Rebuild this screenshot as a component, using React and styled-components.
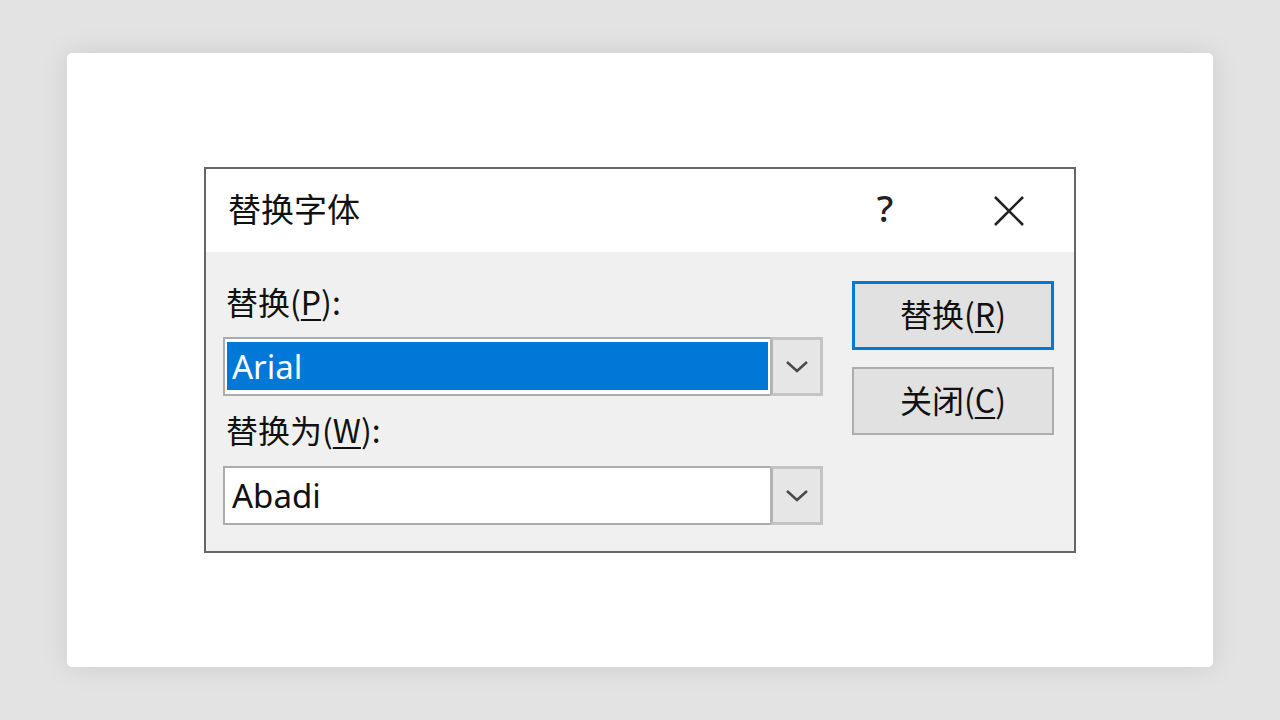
import React from "react";
import styled, { createGlobalStyle } from "styled-components";

const Global = createGlobalStyle`
  html, body { margin: 0; padding: 0; }
  body {
    background: #e3e3e3;
    font-family: "Noto Sans", "Noto Sans CJK SC", sans-serif;
  }
`;

const Page = styled.div`
  width: 1280px;
  height: 720px;
  padding: 53px 67px;
  box-sizing: border-box;
`;

const Card = styled.div`
  width: 100%;
  height: 100%;
  background: #ffffff;
  border-radius: 5px;
  box-shadow: 0 0 28px rgba(0, 0, 0, 0.1);
  display: flex;
  align-items: center;
  justify-content: center;
`;

const Dialog = styled.div`
  width: 872px;
  height: 386px;
  box-sizing: border-box;
  border: 2px solid #666666;
  background: #f0f0f0;
  display: flex;
  flex-direction: column;
  color: #111;
`;

const TitleBar = styled.div`
  height: 83px;
  box-sizing: border-box;
  background: #ffffff;
  display: flex;
  align-items: center;
  padding: 0 35px 6px 22px;
`;

const Title = styled.div`
  font-family: "Noto Sans CJK SC", sans-serif;
  font-size: 33px;
  flex: 1;
  color: #111;
`;

const Help = styled.div`
  width: 50px;
  text-align: center;
  font-family: "Noto Sans", sans-serif;
  font-size: 37px;
  font-weight: 500;
  color: #222;
  margin-right: 69px;
  line-height: 1;
`;

const CloseX = styled.div`
  width: 60px;
  display: flex;
  justify-content: center;
  align-items: center;
  margin-top: 6px;
`;

const Body = styled.div`
  flex: 1;
  display: flex;
  align-items: flex-start;
  padding: 29px 20px 0 17px;
  gap: 29px;
`;

const LeftCol = styled.div`
  width: 600px;
  display: flex;
  flex-direction: column;
`;

const Label = styled.div`
  font-size: 32px;
  line-height: 40px;
  height: 40px;
  margin-bottom: ${(p) => p.$mb}px;
  margin-top: ${(p) => p.$mt || 0}px;
  padding-left: 3px;
  font-family: "Noto Sans CJK SC", sans-serif;
  color: #111;
  u { text-underline-offset: 4px; text-decoration-thickness: 2px; }
`;

const Combo = styled.div`
  height: 59px;
  box-sizing: border-box;
  border: 2px solid #acacac;
  background: #ffffff;
  display: flex;
`;

const Field = styled.div`
  flex: 1;
  padding: 3px 2px 4px 2px;
  display: flex;
`;

const Value = styled.div`
  flex: 1;
  display: flex;
  align-items: center;
  padding-left: 5px;
  font-family: "Noto Sans", sans-serif;
  font-size: 33px;
  background: ${(p) => (p.$selected ? "#0078d7" : "transparent")};
  color: ${(p) => (p.$selected ? "#ffffff" : "#111")};
`;

const DropBtn = styled.div`
  width: 53px;
  box-sizing: border-box;
  background: #e6e6e6;
  border: 3px solid #c4c4c4;
  border-left-color: #b4b4b4;
  margin: -2px -2px -2px 0;
  display: flex;
  align-items: center;
  justify-content: center;
`;

const RightCol = styled.div`
  width: 202px;
  display: flex;
  flex-direction: column;
  gap: 17px;
`;

const Button = styled.div`
  height: ${(p) => p.$h}px;
  box-sizing: border-box;
  background: #e1e1e1;
  border: ${(p) => (p.$default ? "3px solid #0078d7" : "2px solid #adadad")};
  display: flex;
  align-items: center;
  justify-content: center;
  padding-bottom: 5px;
  font-family: "Noto Sans CJK SC", sans-serif;
  font-size: 32px;
  color: #111;
  u { text-underline-offset: 4px; text-decoration-thickness: 2px; }
`;

const Chevron = () => (
  <svg width="24" height="14" viewBox="0 0 24 14">
    <path d="M2 2 L12 11 L22 2" fill="none" stroke="#4a4a4a" strokeWidth="2.5" />
  </svg>
);

const XIcon = () => (
  <svg width="32" height="32" viewBox="0 0 32 32">
    <path d="M2 2 L30 30 M30 2 L2 30" stroke="#222" strokeWidth="2.6" fill="none" />
  </svg>
);

export default function App() {
  return (
    <>
      <Global />
      <Page>
        <Card>
          <Dialog>
            <TitleBar>
              <Title>替换字体</Title>
              <Help>?</Help>
              <CloseX>
                <XIcon />
              </CloseX>
            </TitleBar>
            <Body>
              <LeftCol>
                <Label $mb={16}>
                  替换(<u>P</u>):
                </Label>
                <Combo>
                  <Field>
                    <Value $selected>Arial</Value>
                  </Field>
                  <DropBtn>
                    <Chevron />
                  </DropBtn>
                </Combo>
                <Label $mt={13} $mb={17}>
                  替换为(<u>W</u>):
                </Label>
                <Combo>
                  <Field>
                    <Value>Abadi</Value>
                  </Field>
                  <DropBtn>
                    <Chevron />
                  </DropBtn>
                </Combo>
              </LeftCol>
              <RightCol>
                <Button $default $h={69}>
                  替换(<u>R</u>)
                </Button>
                <Button $h={68}>
                  关闭(<u>C</u>)
                </Button>
              </RightCol>
            </Body>
          </Dialog>
        </Card>
      </Page>
    </>
  );
}
